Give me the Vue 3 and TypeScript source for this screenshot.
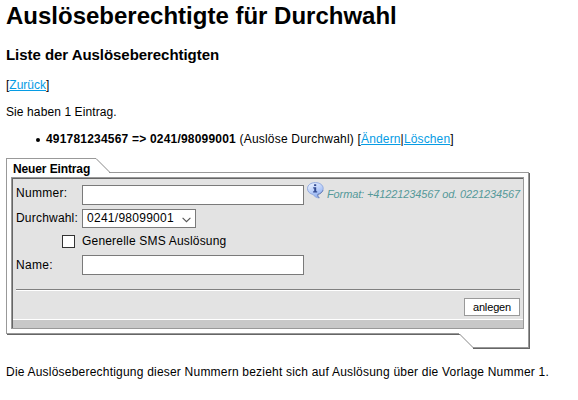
<script setup lang="ts">
import { ref } from 'vue'

interface Entry {
  number: string
  extension: string
  label: string
}

const entries = ref<Entry[]>([
  { number: '491781234567', extension: '0241/98099001', label: 'Auslöse Durchwahl' },
])
const phone = ref('')
const name = ref('')
const general = ref(false)
const extension = ref('0241/98099001')
</script>

<template>
  <main class="page">
    <h1>Auslöseberechtigte für Durchwahl</h1>
    <h2>Liste der Auslöseberechtigten</h2>
    <p class="back">[<a href="#">Zurück</a>]</p>
    <p class="count">Sie haben 1 Eintrag.</p>
    <ul class="entries">
      <li v-for="e in entries" :key="e.number">
        <b>{{ e.number }} =&gt; {{ e.extension }}</b><span class="kind"> ({{ e.label }}) </span><span class="actions">[<a href="#">Ändern</a>|<a href="#">Löschen</a>]</span>
      </li>
    </ul>

    <form class="box" @submit.prevent>
      <svg class="frame" width="524" height="191" viewBox="0 0 524 191" fill="none">
        <g shape-rendering="crispEdges">
          <path d="M.5 176V.5H90M103 14.5H522.5V189.5H467M1 175.5H453" stroke="#999" />
          <path d="M523.5 15V190.5H467M1 176.5H454" stroke="#666" />
        </g>
        <path d="M90 .5L104 14.5M453.5 176L467.5 190" stroke="#888" />
      </svg>
      <div class="tab">Neuer Eintrag</div>
      <div class="panel">
        <div class="row first">
          <label class="caption wide" for="nr">Nummer:</label>
          <input id="nr" v-model="phone" class="field" type="text" />
          <svg class="info" width="17" height="17" viewBox="0 0 17 17">
            <defs>
              <linearGradient id="bubble" x1="0" y1="0" x2="0.5" y2="1">
                <stop offset="0" stop-color="#f2f7ff" />
                <stop offset=".5" stop-color="#c3d5fb" />
                <stop offset="1" stop-color="#8fb0f2" />
              </linearGradient>
            </defs>
            <path d="M8.3 .6C12.8.6 16.2 3 16.2 6.6C16.2 9.4 14 11.6 10.8 12.4C10.5 13.7 11 14.9 12.3 16C9.4 15.7 7.3 14.5 6.2 12.5C2.8 11.9 .5 9.6 .5 6.6C.5 3 3.9.6 8.3.6Z" fill="url(#bubble)" stroke="#8ba5dd" stroke-width=".9" />
            <path d="M15.9 8.2C15.2 10.5 13.3 11.8 10.8 12.4C10.5 13.7 11 14.9 12.3 16" fill="none" stroke="#6477ae" stroke-width=".9" />
            <path d="M7.1 2.3H9.2V4.1H7.1ZM6.2 5.3H9.2V9.2H10.2V10.4H6.1V9.2H7.2V6.4H6.2Z" fill="#334b91" />
          </svg>
          <i class="hint">Format: +41221234567 od. 0221234567</i>
        </div>
        <div class="row second">
          <label class="caption">Durchwahl:</label>
          <div class="select" role="combobox" tabindex="0">
            <span>{{ extension }}</span>
            <svg width="9" height="6" viewBox="0 0 9 6" fill="none">
              <path d="M.6.8L4.5 4.7L8.4.8" stroke="#555" stroke-width="1.1" />
            </svg>
          </div>
        </div>
        <label class="row third">
          <input v-model="general" class="check" type="checkbox" />
          <span class="checktext">Generelle SMS Auslösung</span>
        </label>
        <div class="row fourth">
          <label class="caption wide" for="name">Name:</label>
          <input id="name" v-model="name" class="field" type="text" />
        </div>
        <div class="rule"></div>
        <div class="submit"><button type="submit">anlegen</button></div>
        <div class="strip"></div>
      </div>
    </form>

    <p class="note">Die Auslöseberechtigung dieser Nummern bezieht sich auf Auslösung über die Vorlage Nummer 1.</p>
  </main>
</template>

<style>
body {
  background: #fff;
}
</style>

<style scoped>
.page {
  box-sizing: border-box;
  width: 578px;
  height: 400px;
  padding: 2px 0 0 6px;
  overflow: hidden;
  font: 12px/16px "Liberation Sans", Arial, sans-serif;
  color: #000;
  white-space: nowrap;
}
h1, h2, p, ul {
  margin: 0;
  padding: 0;
}
h1 {
  font-size: 24px;
  line-height: 28px;
}
h2 {
  margin-top: 16px;
  font-size: 15px;
  line-height: 18px;
  letter-spacing: -0.05px;
}
a {
  color: #069ce4;
}
.back {
  margin-top: 13px;
}
.count {
  margin-top: 11px;
  letter-spacing: 0.1px;
}
.entries {
  margin-top: 11px;
  list-style: none;
  letter-spacing: 0.2px;
}
.entries li {
  display: flex;
  align-items: center;
  padding-left: 30px;
  white-space: pre;
}
.entries li::before {
  content: "";
  width: 4px;
  height: 4px;
  margin: 2px 6px 0 0;
  border-radius: 50%;
  background: #000;
}
.actions {
  letter-spacing: 0.14px;
}
.box {
  position: relative;
  width: 524px;
  height: 191px;
  margin-top: 11px;
}
.frame {
  position: absolute;
  left: 0;
  top: 0;
}
.tab {
  padding: 3px 0 0 7px;
  font-weight: bold;
  letter-spacing: -0.12px;
}
.panel {
  box-sizing: border-box;
  width: 513px;
  height: 152px;
  margin-left: 5px;
  border: 1px solid #999;
  background: #e3e3e3;
  box-shadow: inset 1px 1px #666;
  padding: 1px 0 0 1px;
}
.row {
  display: flex;
  align-items: flex-start;
}
.row > * {
  flex: none;
}
.first {
  padding-top: 6px;
  height: 18px;
}
.second {
  padding-top: 7px;
  height: 19px;
}
.caption {
  box-sizing: border-box;
  width: 69px;
  padding-left: 3px;
  letter-spacing: 0.2px;
}
.wide {
  letter-spacing: 0.3px;
}
.field {
  box-sizing: border-box;
  width: 222px;
  height: 20px;
  margin: 0;
  padding: 1px 3px;
  border: 1px solid #7a7a7a;
  background: #fff;
  font: inherit;
}
.info {
  margin: -3px 0 0 3px;
}
.hint {
  margin: 2px 0 0 3px;
  font-size: 11px;
  line-height: 14px;
  letter-spacing: -0.12px;
  color: #559999;
}
.select {
  box-sizing: border-box;
  display: flex;
  align-items: flex-start;
  justify-content: space-between;
  width: 114px;
  height: 19px;
  margin-top: -1px;
  padding: 0 4px;
  border: 1px solid #7a7a7a;
  background: #fff;
  letter-spacing: 0.27px;
}
.select svg {
  margin-top: 7px;
}
.third {
  padding: 6px 0 0 49px;
  height: 14px;
}
.check {
  appearance: none;
  box-sizing: border-box;
  width: 13px;
  height: 13px;
  margin: 0 7px 0 0;
  border: 1px solid #333;
  background: #fff;
}
.checktext {
  margin-top: -2px;
  letter-spacing: 0.19px;
}
.fourth {
  padding-top: 6px;
  height: 20px;
}
.fourth .caption {
  margin-top: 2px;
}
.rule {
  height: 1px;
  margin: 14px 3px 0;
  border-bottom: 1px solid #fff;
  background: #808080;
}
.submit {
  display: flex;
  justify-content: flex-end;
  padding: 7px 3px 3px 0;
}
button {
  box-sizing: border-box;
  width: 56px;
  height: 18px;
  margin: 0;
  padding: 0;
  border: 1px solid #999;
  background: #fff;
  color: #000;
  font: 11px/16px "Liberation Sans", Arial, sans-serif;
  letter-spacing: -0.15px;
}
.strip {
  height: 8px;
  border-top: 1px solid #fff;
  background: #c8c8c8;
}
.note {
  margin-top: 15px;
  letter-spacing: 0.21px;
}
</style>
